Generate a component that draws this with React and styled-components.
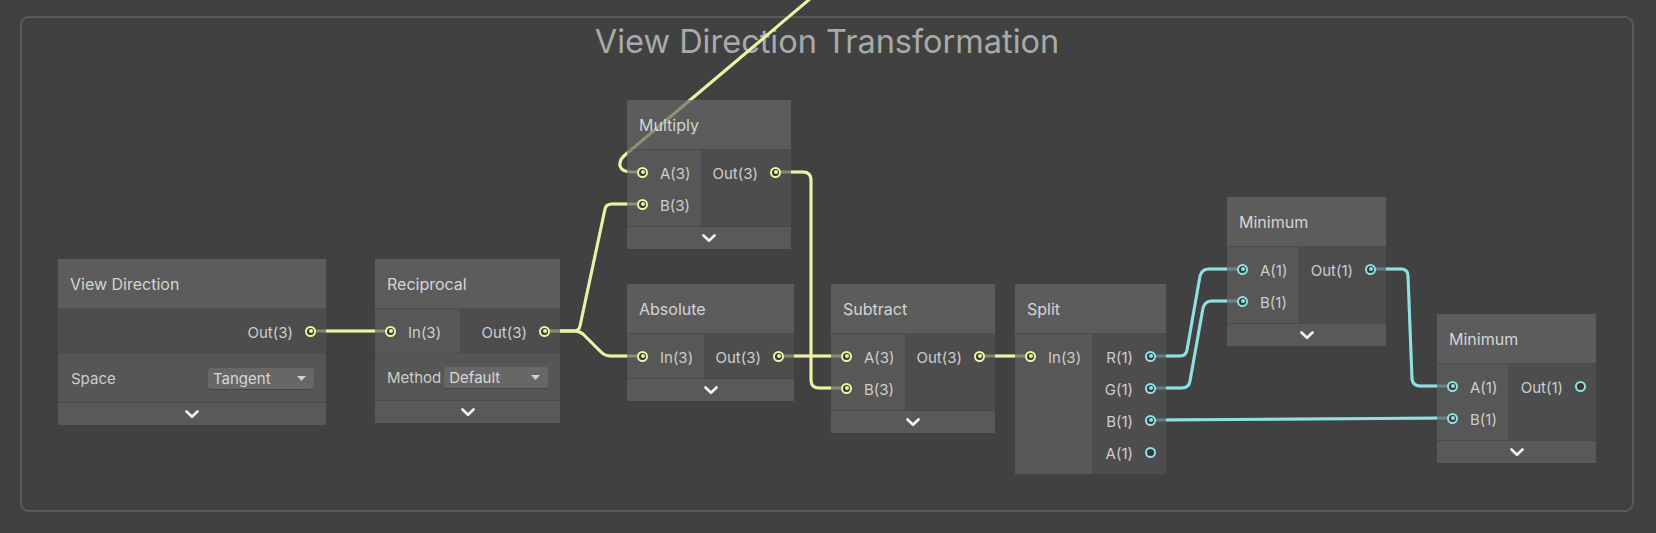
import React from "react";
import styled, { createGlobalStyle } from "styled-components";

const YELLOW = "#eef2a6";
const CYAN = "#8fe0e3";

const GlobalStyle = createGlobalStyle`
  html, body { margin: 0; padding: 0; background: #414141; }
  body { font-family: Inter, "Noto Sans", sans-serif; }
`;

const Canvas = styled.div`
  position: relative;
  width: 1656px;
  height: 533px;
  box-sizing: border-box;
  padding: 16px 22px 21px 20px;
  background: #414141;
  overflow: hidden;
`;

const Group = styled.div`
  box-sizing: border-box;
  height: 100%;
  border: 2px solid #5a5a5a;
  border-radius: 9px;
  padding: 4px 0 0 0;
`;

const GroupTitle = styled.div`
  font-size: 32.5px;
  line-height: 40px;
  color: #a9a9a9;
  text-align: center;
`;

const WireLayer = styled.svg`
  position: absolute;
  left: 0;
  top: 0;
  width: 1656px;
  height: 533px;
  pointer-events: none;
  z-index: ${(p) => (p.$front ? 3 : 1)};
  opacity: ${(p) => (p.$front ? 0.35 : 1)};
`;

const NodeBox = styled.div`
  position: absolute;
  z-index: 2;
  left: ${(p) => p.$x}px;
  top: ${(p) => p.$y}px;
  width: ${(p) => p.$w}px;
  display: flex;
  flex-direction: column;
`;

const NodeHeader = styled.div`
  height: 49px;
  border-bottom: 1px solid #4d4d4d;
  background: #5c5c5c;
  display: flex;
  align-items: center;
  padding-left: 12px;
  font-size: 16px;
  color: #d4d4d4;
`;

const Body = styled.div`
  display: flex;
`;

const InCol = styled.div`
  width: ${(p) => p.$w}px;
  background: #575757;
  padding: 6px 0;
  display: flex;
  flex-direction: column;
`;

const OutCol = styled.div`
  flex: 1;
  background: #4d4d4d;
  padding: 6px 0;
  display: flex;
  flex-direction: column;
`;

const PortRow = styled.div`
  height: 32px;
  display: flex;
  align-items: center;
  gap: 12px;
  padding: ${(p) => (p.$out ? "0 10px 0 0" : "0 0 0 10px")};
  justify-content: ${(p) => (p.$out ? "flex-end" : "flex-start")};
  font-size: 15px;
  color: #cdcdcd;
  white-space: nowrap;
`;

const PortLabel = styled.span`
  padding-top: 2px;
`;

const PortDot = styled.span`
  box-sizing: border-box;
  flex: none;
  width: 11px;
  height: 11px;
  border-radius: 50%;
  border: 2px solid ${(p) => p.$color};
  background: #363636;
  display: flex;
  align-items: center;
  justify-content: center;
  &::after {
    content: "";
    width: 4px;
    height: 4px;
    border-radius: 50%;
    background: ${(p) => p.$color};
    display: ${(p) => (p.$connected ? "block" : "none")};
  }
`;

const ControlRow = styled.div`
  height: ${(p) => p.$h}px;
  border-top: 1px solid #4f4f4f;
  background: #565656;
  display: flex;
  align-items: center;
  gap: 3px;
  padding: 0 12px 0 ${(p) => p.$pl}px;
  font-size: 15px;
  color: #cdcdcd;
`;

const Dropdown = styled.div`
  margin-left: auto;
  width: ${(p) => p.$w}px;
  height: 21px;
  box-sizing: border-box;
  border-radius: 3px;
  background: #676767;
  box-shadow: 0 1px 0 rgba(0, 0, 0, 0.18);
  display: flex;
  align-items: center;
  justify-content: space-between;
  padding: 0 8px 0 5px;
  font-size: 15px;
  color: #d6d6d6;
`;

const Footer = styled.div`
  height: 22px;
  border-top: 1px solid #4a4a4a;
  background: #595959;
  display: flex;
  align-items: center;
  justify-content: center;
`;

const Chevron = () => (
  <svg width="14" height="9" viewBox="0 0 14 9">
    <polyline
      points="1.5,1.5 7,6.8 12.5,1.5"
      fill="none"
      stroke="#f2f2f2"
      strokeWidth="2.6"
      strokeLinecap="round"
      strokeLinejoin="round"
    />
  </svg>
);

const Caret = () => (
  <svg width="9" height="5" viewBox="0 0 9 5">
    <polygon points="0,0 9,0 4.5,5" fill="#cfcfcf" />
  </svg>
);

const Port = ({ label, color, connected = true, out }) => (
  <PortRow $out={out}>
    {out ? (
      <>
        <PortLabel>{label}</PortLabel>
        <PortDot $color={color} $connected={connected} />
      </>
    ) : (
      <>
        <PortDot $color={color} $connected={connected} />
        <PortLabel>{label}</PortLabel>
      </>
    )}
  </PortRow>
);

const Node = ({ title, x, y, w, inW, inputs, outputs, control, footer = true }) => (
  <NodeBox $x={x} $y={y} $w={w}>
    <NodeHeader>{title}</NodeHeader>
    <Body>
      {inputs && (
        <InCol $w={inW}>
          {inputs.map((p) => (
            <Port key={p.label} {...p} />
          ))}
        </InCol>
      )}
      <OutCol>
        {outputs.map((p) => (
          <Port key={p.label} out {...p} />
        ))}
      </OutCol>
    </Body>
    {control && (
      <ControlRow $h={control.h} $pl={control.pl}>
        <span>{control.label}</span>
        <Dropdown $w={control.w}>
          <span>{control.value}</span>
          <Caret />
        </Dropdown>
      </ControlRow>
    )}
    {footer && (
      <Footer>
        <Chevron />
      </Footer>
    )}
  </NodeBox>
);

const nodes = [
  {
    title: "View Direction",
    x: 58, y: 259, w: 268,
    outputs: [{ label: "Out(3)", color: YELLOW }],
    control: { label: "Space", value: "Tangent", w: 106, h: 48, pl: 13 },
  },
  {
    title: "Reciprocal",
    x: 375, y: 259, w: 185, inW: 85,
    inputs: [{ label: "In(3)", color: YELLOW }],
    outputs: [{ label: "Out(3)", color: YELLOW }],
    control: { label: "Method", value: "Default", w: 105, h: 46, pl: 12 },
  },
  {
    title: "Multiply",
    x: 627, y: 100, w: 164, inW: 74,
    inputs: [
      { label: "A(3)", color: YELLOW },
      { label: "B(3)", color: YELLOW },
    ],
    outputs: [{ label: "Out(3)", color: YELLOW }],
  },
  {
    title: "Absolute",
    x: 627, y: 284, w: 167, inW: 77,
    inputs: [{ label: "In(3)", color: YELLOW }],
    outputs: [{ label: "Out(3)", color: YELLOW }],
  },
  {
    title: "Subtract",
    x: 831, y: 284, w: 164, inW: 74,
    inputs: [
      { label: "A(3)", color: YELLOW },
      { label: "B(3)", color: YELLOW },
    ],
    outputs: [{ label: "Out(3)", color: YELLOW }],
  },
  {
    title: "Split",
    x: 1015, y: 284, w: 151, inW: 77, footer: false,
    inputs: [{ label: "In(3)", color: YELLOW }],
    outputs: [
      { label: "R(1)", color: CYAN },
      { label: "G(1)", color: CYAN },
      { label: "B(1)", color: CYAN },
      { label: "A(1)", color: CYAN, connected: false },
    ],
  },
  {
    title: "Minimum",
    x: 1227, y: 197, w: 159, inW: 71,
    inputs: [
      { label: "A(1)", color: CYAN },
      { label: "B(1)", color: CYAN },
    ],
    outputs: [{ label: "Out(1)", color: CYAN }],
  },
  {
    title: "Minimum",
    x: 1437, y: 314, w: 159, inW: 71,
    inputs: [
      { label: "A(1)", color: CYAN },
      { label: "B(1)", color: CYAN },
    ],
    outputs: [{ label: "Out(1)", color: CYAN, connected: false }],
  },
];

const wires = [
  { c: YELLOW, d: "M 315 331 H 386" },
  { c: YELLOW, d: "M 549 331 H 574 Q 579 331 580 326 L 605 209 Q 606 204 612 204 H 638" },
  { c: YELLOW, d: "M 549 331 H 574 Q 579 331 583 334 L 601 352 Q 605 356 611 356 H 638" },
  { c: YELLOW, d: "M 811 -2 L 625 155 Q 619 160 620 166 Q 622 172 632 172 H 638" },
  { c: YELLOW, d: "M 780 172 H 803 Q 811 172 811 180 V 380 Q 811 388 819 388 H 842" },
  { c: YELLOW, d: "M 783 356 H 842" },
  { c: YELLOW, d: "M 984 356 H 1026" },
  { c: CYAN, d: "M 1155 356 H 1180 Q 1186 356 1187 350 L 1200 276 Q 1202 269 1209 269 H 1238" },
  { c: CYAN, d: "M 1155 388 H 1182 Q 1189 388 1190 381 L 1203 308 Q 1205 301 1212 301 H 1238" },
  { c: CYAN, d: "M 1155 420 L 1448 418" },
  { c: CYAN, d: "M 1375 269 H 1401 Q 1408 269 1408 276 L 1412 379 Q 1413 386 1420 386 H 1448" },
];

const Wires = ({ front }) => (
  <WireLayer $front={front} viewBox="0 0 1656 533">
    {wires.map((w, i) => (
      <path key={i} d={w.d} fill="none" stroke={w.c} strokeWidth="3" strokeLinejoin="round" />
    ))}
  </WireLayer>
);

export default function App() {
  return (
    <>
      <GlobalStyle />
      <Canvas>
        <Group>
          <GroupTitle>View Direction Transformation</GroupTitle>
        </Group>
        <Wires />
        {nodes.map((n, i) => (
          <Node key={i} {...n} />
        ))}
        <Wires front />
      </Canvas>
    </>
  );
}
